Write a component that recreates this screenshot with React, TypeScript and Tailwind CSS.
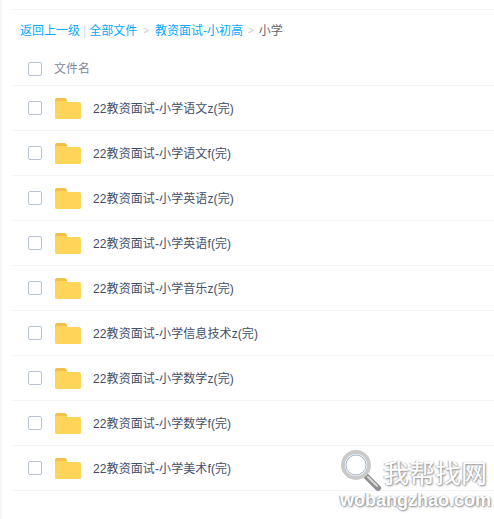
const folders = [
  "22教资面试-小学语文z(完)",
  "22教资面试-小学语文f(完)",
  "22教资面试-小学英语z(完)",
  "22教资面试-小学英语f(完)",
  "22教资面试-小学音乐z(完)",
  "22教资面试-小学信息技术z(完)",
  "22教资面试-小学数学z(完)",
  "22教资面试-小学数学f(完)",
  "22教资面试-小学美术f(完)",
];

const FONT = "font-['Liberation_Sans','Noto_Sans_CJK_SC',sans-serif]";

const Checkbox = () => (
  <span className="w-[14px] h-[14px] shrink-0 rounded-[2px] border border-[#b8c4d4] bg-white" />
);

const FolderIcon = () => (
  <svg width="26" height="21" viewBox="0 0 26 21" className="block shrink-0">
    <path d="M0 2a2 2 0 0 1 2-2h7a3 3 0 0 1 3 3v2H0z" fill="#f2bf4d" />
    <path d="M0 5a2 2 0 0 1 2-2h9l2 1h11a2 2 0 0 1 2 2V19.500a1.500 1.500 0 0 1-1.500 1.500H1.500A1.500 1.500 0 0 1 0 19.500z" fill="#ffd559" />
  </svg>
);

const Watermark = () => (
  <div className="absolute left-[339px] top-[449px] w-[155px] h-[66px]">
    <svg width="48" height="46" viewBox="0 0 48 46" className="absolute left-0 top-0">
      <line x1="28" y1="28" x2="39" y2="39" stroke="#8f8f8f" strokeWidth="6" strokeLinecap="round" />
      <line x1="29" y1="28" x2="38" y2="37" stroke="#d8d8d8" strokeWidth="2" strokeLinecap="round" />
      <circle cx="17" cy="16" r="13" fill="#ffffff" fillOpacity="0.7" stroke="#cacaca" strokeWidth="4" />
      <circle cx="17" cy="16" r="10" fill="none" stroke="#9db4cc" strokeWidth="1" />
    </svg>
    <div className="absolute left-[44px] top-[6px] text-[26px] leading-[34px] whitespace-nowrap text-white font-['Noto_Sans_CJK_SC',sans-serif] [text-shadow:1px_1px_2px_#888,-1px_0_1px_#bbb]">
      我帮找网
    </div>
    <div className="absolute left-[1px] top-[40px] text-[18px] leading-[22px] whitespace-nowrap text-white font-['Liberation_Sans',sans-serif] font-bold [text-shadow:1px_1px_2px_#888,-1px_0_1px_#aaa]">
      wobangzhao.com
    </div>
  </div>
);

export default function App() {
  return (
    <div className={`relative w-[494px] h-[519px] overflow-hidden bg-white ${FONT} text-[12px]`}>
      <div className="flex h-full">
        <div className="w-[2px] bg-[#f7f7f9] shrink-0" />
        <div className="flex-1 pl-[10px] pt-[9px]">
          <div className="h-[42px] border-t border-[#f4f5f7] flex items-center pl-[8px] text-[#06a7ff] whitespace-nowrap">
            <span>返回上一级</span>
            <span className="ml-[3px] mr-[3px] text-[#c4d8e8]">|</span>
            <span>全部文件</span>
            <span className="mx-[6px] text-[#c8ccd2] text-[10px]">&gt;</span>
            <span>教资面试-小初高</span>
            <span className="mx-[5px] text-[#c8ccd2] text-[10px]">&gt;</span>
            <span className="text-[#666]">小学</span>
          </div>
          <div className="h-[35px] flex items-center pl-[16px] pt-[2px] border-b border-[#f4f5f7] text-[#818999]">
            <Checkbox />
            <span className="ml-[12px] -mt-[1px]">文件名</span>
          </div>
          {folders.map((name) => (
            <div key={name} className="h-[45px] flex items-center pl-[16px] border-b border-[#f4f5f7]">
              <Checkbox />
              <span className="ml-[13px]">
                <FolderIcon />
              </span>
              <span className="ml-[12px] mt-[1px] tracking-[0.1px] text-[#424e67] whitespace-nowrap">{name}</span>
            </div>
          ))}
        </div>
      </div>
      <Watermark />
    </div>
  );
}
